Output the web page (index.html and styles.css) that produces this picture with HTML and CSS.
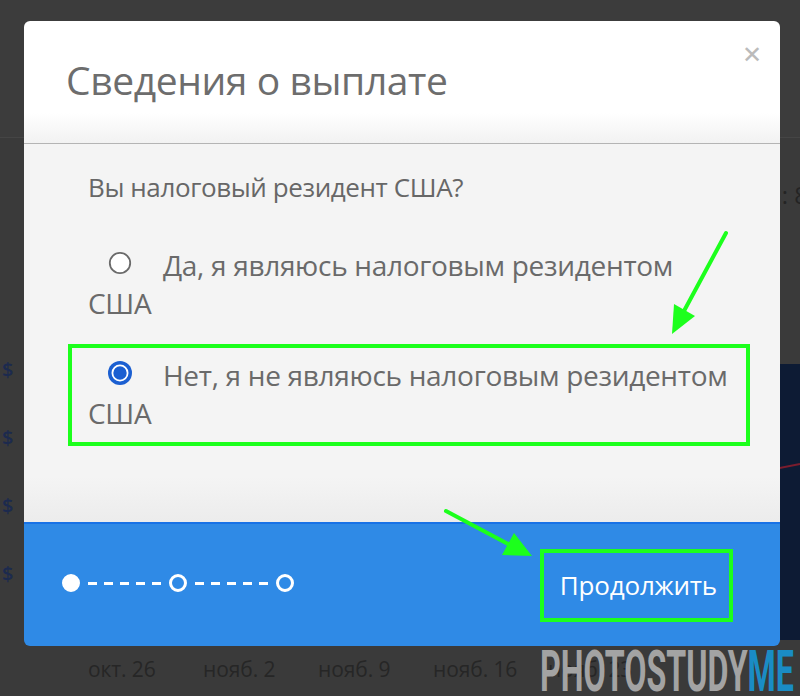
FILE: index.html
```html
<!DOCTYPE html>
<html lang="ru">
<head>
<meta charset="utf-8">
<title>Сведения о выплате</title>
<link rel="stylesheet" href="styles.css">
</head>
<body>
  <div class="dash">
    <div class="dash-top"></div>
    <div class="dash-mid">
      <span class="stat">: 8</span>
    </div>
    <div class="dash-chart">
      <div class="axis">
        <span>$</span><span>$</span><span>$</span><span>$</span>
      </div>
      <div class="plot">
        <svg class="plot-line" width="760" height="275" viewBox="0 0 760 275">
          <path d="M0 170 L700 112 L760 100" fill="none" stroke="#7a1d2e" stroke-width="2"/>
        </svg>
      </div>
    </div>
    <div class="dates">
      <span>окт. 26</span><span>нояб. 2</span><span>нояб. 9</span><span>нояб. 16</span><span>нояб. 23</span>
    </div>
  </div>

  <div class="modal">
    <div class="modal-head">
      <h1 class="modal-title">Сведения о выплате</h1>
      <span class="close">&#x2715;</span>
    </div>
    <div class="modal-body">
      <p class="question">Вы налоговый резидент США?</p>
      <label class="opt">
        <svg class="radio" width="24" height="24" viewBox="0 0 24 24">
          <circle cx="12" cy="12" r="10.2" fill="#fff" stroke="#6a6a6a" stroke-width="1.8"/>
        </svg>Да, я являюсь налоговым резидентом США
      </label>
      <div class="mark">
        <label class="opt">
          <svg class="radio" width="24" height="24" viewBox="0 0 24 24">
            <circle cx="12" cy="12" r="12" fill="#1b5fd1"/>
            <circle cx="12" cy="12" r="7.6" fill="none" stroke="#fff" stroke-width="1.8"/>
            <circle cx="12" cy="12" r="5" fill="#1b5fd1"/>
          </svg>Нет, я не являюсь налоговым резидентом США
        </label>
      </div>
    </div>
    <div class="modal-foot">
      <div class="steps">
        <span class="dot dot-on"></span>
        <span class="dash-line"></span>
        <span class="dot"></span>
        <span class="dash-line"></span>
        <span class="dot"></span>
      </div>
      <div class="mark mark-btn">
        <button class="next" type="button">Продолжить</button>
      </div>
    </div>
  </div>

  <svg class="arrows" width="800" height="696" viewBox="0 0 800 696">
    <g fill="#1cff1c" stroke="#1cff1c" stroke-width="4" stroke-linecap="round">
      <line x1="726" y1="233" x2="684" y2="311"/>
      <polygon stroke="none" points="672,334 695,316 674,304"/>
      <line x1="446" y1="511" x2="510" y2="545"/>
      <polygon stroke="none" points="532,556 502,555 514,533"/>
    </g>
  </svg>

  <div class="brand"><span class="brand-a">PHOTOSTUDY</span><span class="brand-b">ME</span></div>
</body>
</html>
```

FILE: styles.css
```css
* { box-sizing: border-box; }

html, body {
  margin: 0;
  padding: 0;
  width: 800px;
  height: 696px;
  overflow: hidden;
  background: #3a3a3a;
  font-family: "Open Sans", "Noto Sans", sans-serif;
}

body { position: relative; }

/* dashboard behind the dialog */
.dash {
  display: flex;
  flex-direction: column;
  height: 696px;
}
.dash-top {
  height: 138px;
  background: #3c3c3c;
  border-bottom: 1px solid #454545;
}
.dash-mid {
  height: 226px;
  display: flex;
  justify-content: flex-end;
  padding-top: 40px;
}
.stat {
  color: #242424;
  font-size: 24px;
  margin-right: -8px;
}
.dash-chart {
  height: 276px;
  display: flex;
}
.axis {
  width: 40px;
  display: flex;
  flex-direction: column;
  gap: 47px;
  padding: 0 0 0 2px;
  color: #1c2a4e;
  font-size: 20px;
  font-weight: 600;
  line-height: 21px;
}
.axis span:first-child { margin-top: -5px; }
.plot {
  flex: 1;
  background: #0d1b34;
}
.plot-line { display: block; }
.dates {
  display: flex;
  padding: 15px 0 0 88px;
  color: #262626;
  font-size: 21px;
  letter-spacing: -0.1px;
}
.dates span { width: 115px; flex: none; }

/* dialog */
.modal {
  position: absolute;
  left: 24px;
  top: 21px;
  width: 756px;
  height: 625px;
  border-radius: 6px;
  overflow: hidden;
  display: flex;
  flex-direction: column;
}
.modal-head {
  height: 123px;
  background: linear-gradient(#fff 0, #fff 75%, #f2f2f2 100%);
  border-bottom: 1px solid #b4b4b4;
  display: flex;
  justify-content: space-between;
  align-items: flex-start;
  padding: 0 18px 0 42px;
}
.modal-title {
  margin: 32px 0 0;
  font-weight: 400;
  font-size: 39px;
  color: #6d6d6d;
  letter-spacing: -0.4px;
}
.close {
  margin-top: 16px;
  color: #bbbbbb;
  font-size: 24px;
}
.modal-body {
  flex: 1;
  background: linear-gradient(#f4f4f4 0, #f4f4f4 88%, #ececec 100%);
  padding: 26px 44px 0 64px;
}
.question {
  margin: 0 0 41px;
  font-size: 26px;
  line-height: 35px;
  color: #676767;
  letter-spacing: -0.4px;
}
.opt {
  display: block;
  max-width: 647px;
  font-size: 28px;
  line-height: 38px;
  color: #6a6a6a;
  letter-spacing: -0.3px;
}
.radio {
  display: inline-block;
  vertical-align: 1px;
  margin: 0 31px 0 20px;
}

/* green highlight frame */
.mark {
  border: 4px solid #1cff1c;
}
.modal-body .mark {
  margin: 22px -14px 0 -20px;
  padding: 8px 10px 10px 16px;
}

.modal-foot {
  height: 124px;
  background: #2f8ae6;
  border-top: 2px solid #1872e6;
  display: flex;
  align-items: center;
  justify-content: space-between;
  padding: 0 47px 0 38px;
}
.steps {
  display: flex;
  align-items: center;
  margin-top: -4px;
}
.dot {
  width: 18px;
  height: 18px;
  border-radius: 50%;
  border: 3px solid #fff;
}
.dot-on { background: #fff; }
.dash-line {
  width: 73px;
  height: 3px;
  margin: 0 8px;
  background: repeating-linear-gradient(to right, #fff 0 9px, transparent 9px 16px);
}
.mark-btn {
  padding: 0;
}
.next {
  display: block;
  border: 0;
  background: transparent;
  color: #fff;
  font-family: inherit;
  font-size: 26px;
  line-height: 35px;
  padding: 15px 12px 15px 16px;
  letter-spacing: -0.2px;
}

/* annotation arrows */
.arrows {
  position: absolute;
  left: 0;
  top: 0;
  pointer-events: none;
}

/* corner watermark */
.brand {
  position: absolute;
  left: 540px;
  top: 642px;
  font-family: Roboto, sans-serif;
  font-weight: 700;
  font-size: 57px;
  line-height: 60px;
  transform: scaleX(0.565);
  transform-origin: left top;
  white-space: nowrap;
}
.brand-a { color: #a3a3a3; }
.brand-b { color: #1a8cc4; }
```
